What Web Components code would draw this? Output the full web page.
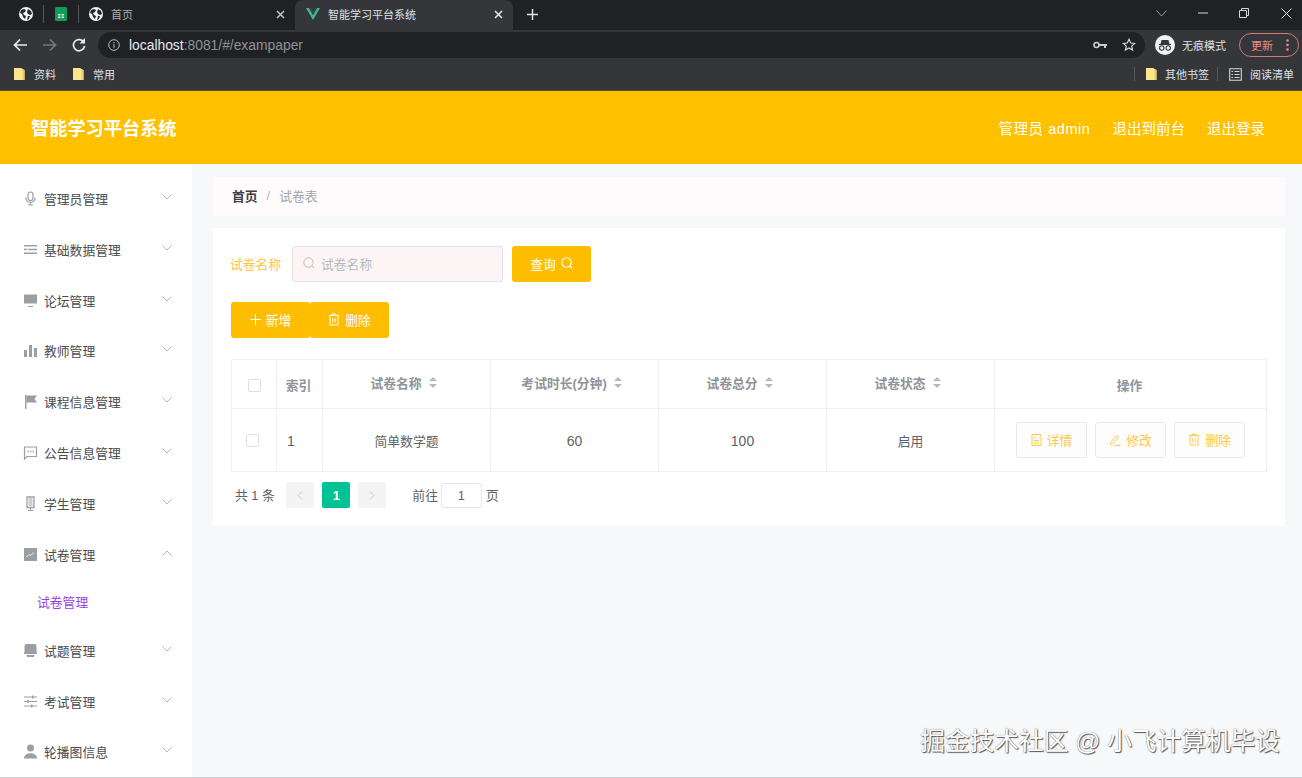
<!DOCTYPE html>
<html lang="zh">
<head>
<meta charset="utf-8">
<title>智能学习平台系统</title>
<style>
  html, body { margin: 0; height: 100%; overflow: hidden; background: #f7f8fa; }
  body { font-family: "Liberation Sans", "Noto Sans CJK SC", sans-serif; font-size: 12.8px; }
</style>
</head>
<body>
<browser-frame></browser-frame>
<site-header></site-header>
<page-body>
  <side-menu slot="side"></side-menu>
  <bread-crumb></bread-crumb>
  <paper-panel></paper-panel>
</page-body>
<water-mark>掘金技术社区 @ 小飞计算机毕设</water-mark>

<script>
const FONT = `"Liberation Sans", "Noto Sans CJK SC", sans-serif`
const globe = `<svg width="16" height="16" viewBox="0 0 16 16"><circle cx="8" cy="8" r="7" fill="#f1f3f4"/><path d="M3 4l3-1 2 1-1 2-2 1 1 2 2 1-1 3-2-2-1-3-2-1zM10 3l3 2 1 3-2 1-2-1-1-2zM10 10l2 0-1 3-2 1z" fill="#26272b"/></svg>`
const folder = `<svg width="11" height="14" viewBox="0 0 11 14"><path d="M0 1h7l3.500 2v10H0z" fill="#fde58f"/><path d="M8.500 3h2v10h-2z" fill="#e8ca72"/></svg>`

class BrowserFrame extends HTMLElement {
  constructor() {
    super()
    this.attachShadow({ mode: "open" }).innerHTML = `
    <style>
      :host { display: block; font-family: ${FONT}; color: #dfe1e5; }
      .tabs { height: 30px; background: #202124; display: flex; align-items: center; }
      .pin { width: 34px; display: flex; justify-content: center; flex: none; padding-bottom: 2px; box-sizing: border-box; }
      .pin:first-child { width: 43px; padding-left: 9px; }
      .sep { width: 1px; height: 18px; background: #55575b; flex: none; margin-bottom: 2px; }
      .tab { height: 30px; display: flex; align-items: center; box-sizing: border-box; font-size: 11px; flex: none; padding-bottom: 2px; }
      .tab.plain { width: 216px; padding-left: 9px; color: #a9acb1; }
      .tab.plain > svg { margin-right: 7px; }
      .tab .x { margin-left: auto; margin-right: 10px; display: flex; }
      .tab.on { background: #35363a; border-radius: 8px 8px 0 0; width: 218px; padding-left: 11px; color: #dfe1e5; }
      .tab.on svg.vue { margin-right: 8px; }
      .plus { margin-left: 14px; display: flex; margin-bottom: 2px; }
      .win { margin-left: auto; display: flex; align-items: center; padding-bottom: 4px; }
      .win span { width: 41.500px; display: flex; justify-content: center; }
      .win span:last-child { width: 32px; margin-left: 5px; }
      .bar { height: 30px; background: #35363a; display: flex; align-items: center; padding-left: 13px; }
      .nav { display: flex; align-items: center; gap: 15.500px; flex: none; }
      .omni { margin-left: 12px; width: 1047px; height: 26px; border-radius: 13px; background: #202124; display: flex; align-items: center; padding-left: 10px; box-sizing: border-box; font-size: 13.850px; flex: none; }
      .omni b { font-weight: 400; color: #e8eaed; margin-left: 9px; }
      .omni i { font-style: normal; color: #8f9296; }
      .omni .r { margin-left: auto; display: flex; gap: 15px; align-items: center; padding-right: 9px; }
      .incog { margin-left: 10px; display: flex; align-items: center; gap: 7px; font-size: 11px; height: 26px; width: 84px; flex: none; box-sizing: border-box; }
      .update { width: 60px; height: 24px; border: 1px solid #d07a74; border-radius: 13px; box-sizing: border-box; display: flex; align-items: center; padding-left: 11px; gap: 13px; color: #ee8a80; font-size: 11px; flex: none; }
      .marks { height: 31px; background: #35363a; display: flex; align-items: center; border-bottom: 1px solid #4f4a3a; box-sizing: border-box; padding: 0 0 2px 14px; font-size: 11px; }
      .marks span { display: flex; align-items: center; gap: 9px; margin-right: 17px; }
      .marks .end { margin-left: auto; display: flex; align-items: center; margin-right: 0; }
      .marks .bar-sep { width: 1px; height: 14px; background: #55575b; margin-right: 11px; }
      .marks .end span { margin-right: 8px; gap: 8px; }
    </style>
    <div class="tabs">
      <div class="pin">${globe}</div><div class="sep"></div>
      <div class="pin"><svg width="12" height="14" viewBox="0 0 12 14"><rect width="12" height="14" rx="1.500" fill="#0f9d58"/><path d="M3 7h2.500v1.500H3zM6.500 7H9v1.500H6.500zM3 9.500h2.500V11H3zM6.500 9.500H9V11H6.500z" fill="#d8f0e2"/></svg></div><div class="sep"></div>
      <div class="tab plain">${globe}<span>首页</span>
        <span class="x"><svg width="9" height="9" viewBox="0 0 9 9"><path d="M1 1l7 7M8 1L1 8" stroke="#c4c7ca" stroke-width="1.500"/></svg></span></div>
      <div class="tab on"><svg class="vue" width="14" height="12" viewBox="0 0 14 12"><path d="M0 0h3l4 7 4-7h3L7 12z" fill="#41b883"/><path d="M3 0h2.200L7 3.200 8.800 0H11L7 7z" fill="#35495e"/></svg><span>智能学习平台系统</span>
        <span class="x"><svg width="9" height="9" viewBox="0 0 9 9"><path d="M1 1l7 7M8 1L1 8" stroke="#e8eaed" stroke-width="1.500"/></svg></span></div>
      <span class="plus"><svg width="11" height="11" viewBox="0 0 11 11"><path d="M5.500 0v11M0 5.500h11" stroke="#dfe1e5" stroke-width="1.500"/></svg></span>
      <div class="win">
        <span><svg width="11" height="7" viewBox="0 0 11 7"><path d="M.5.500l5 5.500 5-5.500" fill="none" stroke="#9a9da1"/></svg></span>
        <span><svg width="10" height="2" viewBox="0 0 10 2"><path d="M0 1h10" stroke="#d6d8db"/></svg></span>
        <span><svg width="10" height="10" viewBox="0 0 10 10"><path d="M.5 2.500h7v7h-7zM2.500 2.500v-2h7v7h-2" fill="none" stroke="#d6d8db"/></svg></span>
        <span><svg width="11" height="11" viewBox="0 0 11 11"><path d="M.5.500l10 10M10.500.500l-10 10" stroke="#e2e4e6"/></svg></span>
      </div>
    </div>
    <div class="bar">
      <div class="nav">
        <svg width="14" height="14" viewBox="0 0 14 14"><path d="M14 7H2M7 1.500L1.500 7 7 12.500" fill="none" stroke="#e8eaed" stroke-width="1.700"/></svg>
        <svg width="14" height="14" viewBox="0 0 14 14"><path d="M0 7h12M7 1.500L12.500 7 7 12.500" fill="none" stroke="#75777b" stroke-width="1.700"/></svg>
        <svg width="14" height="14" viewBox="0 0 14 14"><path d="M12 4.500A5.600 5.600 0 1 0 12.600 8" fill="none" stroke="#e8eaed" stroke-width="1.700"/><path d="M13 0v5.500H7.500z" fill="#e8eaed"/></svg>
      </div>
      <div class="omni">
        <svg width="12" height="12" viewBox="0 0 12 12"><circle cx="6" cy="6" r="5.300" fill="none" stroke="#b7b9bd"/><path d="M6 5.200v3.500M6 3v1.200" stroke="#b7b9bd" stroke-width="1.100"/></svg>
        <b>localhost</b><i>:8081/#/exampaper</i>
        <div class="r">
          <svg width="14" height="8" viewBox="0 0 14 8"><circle cx="3.500" cy="4" r="2.500" fill="none" stroke="#c9cbce" stroke-width="1.600"/><path d="M6 3h8v2h-1v2h-2V5H6z" fill="#c9cbce"/></svg>
          <svg width="14" height="14" viewBox="0 0 14 14"><path d="M7 1.300l1.700 3.700 4 .4-3 2.700.9 4L7 10l-3.600 2.100.9-4-3-2.700 4-.4z" fill="none" stroke="#d5d7da" stroke-width="1.200"/></svg>
        </div>
      </div>
      <div class="incog">
        <svg width="20" height="20" viewBox="0 0 20 20"><circle cx="10" cy="10" r="10" fill="#f1f3f4"/><path d="M4 9h12v1H4zM6.500 5h7l1 4h-9z" fill="#35363a"/><circle cx="6.800" cy="13" r="2.200" fill="none" stroke="#35363a" stroke-width="1.100"/><circle cx="13.200" cy="13" r="2.200" fill="none" stroke="#35363a" stroke-width="1.100"/></svg>
        <span>无痕模式</span>
      </div>
      <div class="update"><span>更新</span><svg width="3" height="12" viewBox="0 0 3 12"><circle cx="1.500" cy="1.500" r="1.300" fill="#ee8a80"/><circle cx="1.500" cy="6" r="1.300" fill="#ee8a80"/><circle cx="1.500" cy="10.500" r="1.300" fill="#ee8a80"/></svg></div>
    </div>
    <div class="marks">
      <span>${folder}资料</span><span>${folder}常用</span>
      <div class="end">
        <i class="bar-sep"></i><span>${folder}其他书签</span><i class="bar-sep"></i>
        <span><svg width="13" height="13" viewBox="0 0 13 13"><path d="M.7.700h11.600v11.600H.7z" fill="none" stroke="#d6d8db" stroke-width="1.100"/><path d="M2.500 3.500h1.500M5.500 3.500h5M2.500 6.500h1.500M5.500 6.500h5M2.500 9.500h1.500M5.500 9.500h5" stroke="#d6d8db"/></svg>阅读清单</span>
      </div>
    </div>`
  }
}
customElements.define("browser-frame", BrowserFrame)

class SiteHeader extends HTMLElement {
  constructor() {
    super()
    this.attachShadow({ mode: "open" }).innerHTML = `
    <style>
      :host { display: flex; align-items: center; height: 73px; background: #ffc000; color: #fff; font-family: ${FONT}; padding: 0 37px 1px 31px; box-sizing: border-box; }
      h1 { margin: 0; font-size: 18.200px; font-weight: 700; }
      nav { margin-left: auto; display: flex; gap: 22px; font-size: 14.500px; }
      .user { letter-spacing: .55px; }
    </style>
    <h1>智能学习平台系统</h1>
    <nav><span class="user">管理员 admin</span><span>退出到前台</span><span>退出登录</span></nav>`
  }
}
customElements.define("site-header", SiteHeader)

class PageBody extends HTMLElement {
  constructor() {
    super()
    this.attachShadow({ mode: "open" }).innerHTML = `
    <style>
      :host { display: grid; grid-template-columns: 192px 1fr; height: 614px; overflow: hidden; border-bottom: 1px solid #cfd0d2; box-sizing: border-box; }
      .main { padding: 13px 17px 0 21px; display: flex; flex-direction: column; gap: 12px; min-width: 0; }
    </style>
    <slot name="side"></slot>
    <div class="main"><slot></slot></div>`
  }
}
customElements.define("page-body", PageBody)

const G = "#9b9ea3"
const MENU = [
  ["管理员管理", `<rect x="5" y="1" width="5" height="8.500" rx="2.500" fill="none" stroke="${G}" stroke-width="1.200"/><path d="M2.800 6.500c0 6.500 9.400 6.500 9.400 0M7.500 11.500V14M5 14h5" fill="none" stroke="${G}" stroke-width="1.200"/>`],
  ["基础数据管理", `<path d="M1 3h13v1.500H1zM5 6.700h9v1.500H5zM1 10.500h13V12H1z" fill="${G}"/><path d="M1 6.700h3v1.500H1z" fill="${G}"/>`],
  ["论坛管理", `<path d="M1 1.500h13v9H1z" fill="${G}"/><path d="M5 13h5v1H5z" fill="${G}"/>`],
  ["教师管理", `<path d="M1 7h3v7H1zM6 2h3v12H6zM11 5h3v9h-3z" fill="${G}"/>`],
  ["课程信息管理", `<path d="M2 1h1.500v14H2z" fill="${G}"/><path d="M3.500 1.500H14l-2.500 3.500L14 8.500H3.500z" fill="${G}"/>`],
  ["公告信息管理", `<path d="M1.500 2h12v9.500H4l-2.500 2.500z" fill="none" stroke="${G}" stroke-width="1.200"/><path d="M4.500 6.500h1.300M7 6.500h1.300M9.500 6.500h1.300" stroke="${G}" stroke-width="1.300"/>`],
  ["学生管理", `<path d="M4 1h7v10.500H4z" fill="none" stroke="${G}" stroke-width="1.300"/><path d="M5.500 3h4M5.500 5h4M5.500 7h4M5.500 9h4" stroke="${G}" stroke-width="1.100"/><path d="M7.500 11.500V14M5 14.500h5" stroke="${G}" stroke-width="1.200"/>`],
  ["试卷管理", `<path d="M1 1h13v13H1z" fill="${G}"/><path d="M3.500 10l2.500-2.500 1.500 1L11 5.500" fill="none" stroke="#fff" stroke-width=".8"/>`, true],
  ["试题管理", `<path d="M3.500 1h8a2 2 0 0 1 2 2v7h-12V3a2 2 0 0 1 2-2z" fill="${G}"/><path d="M1 9.500h13V11H1zM3.500 12h8l-.5 2H4z" fill="${G}"/>`],
  ["考试管理", `<path d="M1 3h13M1 7.500h13M1 12h13" stroke="${G}" stroke-width="1"/><path d="M9 1.500h1.500v3H9zM4 6h1.500v3H4zM8 10.500h1.500v3H8z" fill="${G}"/>`],
  ["轮播图信息", `<circle cx="7.500" cy="4" r="3.500" fill="${G}"/><path d="M1 14.500c0-7 13-7 13 0z" fill="${G}"/>`]
]

class SideMenu extends HTMLElement {
  constructor() {
    super()
    const rows = MENU.map(([label, icon, open]) => `
      <div class="row"><svg class="ico" width="15" height="15" viewBox="0 0 15 15">${icon}</svg><span>${label}</span>
        <svg class="arr" width="10" height="6" viewBox="0 0 10 6"><path d="${open ? "M.5 5.500L5 1l4.500 4.500" : "M.5.500L5 5 9.500.500"}" fill="none" stroke="#b4b6ba"/></svg></div>
      ${open ? `<div class="sub">${label}</div>` : ""}`).join("")
    this.attachShadow({ mode: "open" }).innerHTML = `
    <style>
      :host { display: block; background: #fff; font-family: ${FONT}; color: #4a4c50; font-size: 12.800px; padding-top: 9px; }
      .row { height: 50.850px; display: flex; align-items: center; padding: 0 20px 0 23px; }
      .ico { margin-right: 6px; flex: none; }
      .arr { margin-left: auto; margin-top: -3px; }
      .sub { height: 43px; display: flex; align-items: center; padding-left: 37px; color: #9a3fe0; margin-bottom: 2px; }
    </style>
    ${rows}`
  }
}
customElements.define("side-menu", SideMenu)

class BreadCrumb extends HTMLElement {
  constructor() {
    super()
    this.attachShadow({ mode: "open" }).innerHTML = `
    <style>
      :host { display: flex; align-items: center; height: 39px; background: #fffbfc; padding: 0 0 2px 19px; box-sizing: border-box; font-family: ${FONT}; font-size: 12.800px; }
      b { color: #3d3f43; }
      i { font-style: normal; color: #b3b5b9; margin: 0 9px; }
      span { color: #a3a6ad; }
    </style>
    <b>首页</b><i>/</i><span>试卷表</span>`
  }
}
customElements.define("bread-crumb", BreadCrumb)

class GoldButton extends HTMLElement {
  constructor() {
    super()
    this.attachShadow({ mode: "open" }).innerHTML = `
    <style>
      :host { display: inline-flex; align-items: center; justify-content: center; gap: 5px; height: 36px; width: 79px; background: #ffbd00; color: #fff; border-radius: 3px; font-size: 12.800px; box-sizing: border-box; padding-bottom: 2px; }
    </style>
    <slot></slot>`
  }
}
customElements.define("gold-button", GoldButton)

class LineButton extends HTMLElement {
  constructor() {
    super()
    this.attachShadow({ mode: "open" }).innerHTML = `
    <style>
      :host { display: inline-flex; align-items: center; justify-content: center; gap: 5px; height: 36px; width: 71px; background: #fdfdfd; color: #ffc84a; border: 1px solid #e6e8eb; border-radius: 3px; font-size: 12.800px; box-sizing: border-box; padding-bottom: 1px; }
    </style>
    <slot></slot>`
  }
}
customElements.define("line-button", LineButton)

const sortIcon = `<svg class="sort" width="8" height="11" viewBox="0 0 8 11"><path d="M4 0l4 4H0zM4 11L0 7h8z" fill="#b6b8bc"/></svg>`
const trash = c => `<svg width="12" height="13" viewBox="0 0 12 13"><path d="M1 2.500h10M4 2.500V1h4v1.500M2 2.500V12h8V2.500M4.800 5v4.500M7.200 5v4.500" fill="none" stroke="${c}"/></svg>`

class PaperPanel extends HTMLElement {
  constructor() {
    super()
    this.attachShadow({ mode: "open" }).innerHTML = `
    <style>
      :host { display: block; background: #fff; height: 298px; padding: 18px 18px 0; box-sizing: border-box; font-family: ${FONT}; font-size: 12.800px; color: #606266; }
      .search { display: flex; align-items: center; height: 36px; }
      .search label { color: #ffc44a; width: 62px; margin-left: -1px; padding-bottom: 2px; }
      .input { width: 211px; height: 36px; box-sizing: border-box; background: #fdf5f5; border: 1px solid #e4e2e4; border-radius: 3px; display: flex; align-items: center; padding: 0 0 2px 10px; gap: 6px; color: #b8babf; margin-right: 9px; }
      .ops { display: flex; margin-top: 20px; margin-bottom: 21px; }
      .table { display: grid; grid-template-columns: 45px 46px 168px 168px 168px 168px 1fr; border: 1px solid #eef0f3; width: 1036px; box-sizing: border-box; }
      .c { display: flex; align-items: center; justify-content: center; border-right: 1px solid #eef0f3; box-sizing: border-box; gap: 7px; }
      .c:nth-child(7n) { border-right: 0; }
      .h { height: 49px; border-bottom: 1px solid #eef0f3; color: #909399; font-weight: 700; padding: 0 6px 4px 0; }
      .h.plain { padding: 1px 2px 0 0; }
      .h.first { padding: 2px 0 0; }
      .d { height: 62px; color: #606266; }
      .d.num { font-size: 14px; padding-top: 1px; }
      .d.left { justify-content: flex-start; padding-left: 10px; }
      .d.first { padding: 1px 4px 0 0; }
      .d.op { gap: 8px; }
      .box { width: 13px; height: 13px; border: 1px solid #dcdfe6; border-radius: 2px; box-sizing: border-box; background: #fff; }
      .pager { display: flex; align-items: center; height: 26px; margin-top: 10px; padding-left: 4px; color: #606266; }
      .pg { width: 28px; height: 26px; background: #f4f4f5; border-radius: 2px; display: flex; align-items: center; justify-content: center; margin-right: 8px; }
      .pg.on { background: #00c292; color: #fff; font-weight: 700; }
      .jump { margin-left: 18px; display: flex; align-items: center; gap: 3px; }
      .jump span { padding-bottom: 2px; }
      .jump .in { width: 41px; height: 25px; border: 1px solid #e4e7ed; border-radius: 3px; box-sizing: border-box; display: flex; align-items: center; justify-content: center; margin-right: 1px; padding: 0; }
      .total { margin-right: 11.500px; padding-bottom: 2px; }
    </style>
    <div class="search">
      <label>试卷名称</label>
      <div class="input"><svg width="12" height="12" viewBox="0 0 12 12"><circle cx="5.500" cy="5.500" r="4.700" fill="none" stroke="#b8babf"/><path d="M9 9l2 2" stroke="#b8babf"/></svg>试卷名称</div>
      <gold-button>查询 <svg width="12" height="12" viewBox="0 0 12 12"><circle cx="5.500" cy="5.500" r="4.700" fill="none" stroke="#fff" stroke-width="1.100"/><path d="M9 9l2 2" stroke="#fff" stroke-width="1.100"/></svg></gold-button>
    </div>
    <div class="ops">
      <gold-button><svg width="11" height="11" viewBox="0 0 11 11"><path d="M5.500 0v11M0 5.500h11" stroke="#fff" stroke-width="1.100"/></svg>新增</gold-button>
      <gold-button>${trash("#fff")}删除</gold-button>
    </div>
    <div class="table">
      <div class="c h first"><span class="box"></span></div>
      <div class="c h plain">索引</div>
      <div class="c h">试卷名称 ${sortIcon}</div>
      <div class="c h">考试时长(分钟) ${sortIcon}</div>
      <div class="c h">试卷总分 ${sortIcon}</div>
      <div class="c h">试卷状态 ${sortIcon}</div>
      <div class="c h plain">操作</div>
      <div class="c d first"><span class="box"></span></div>
      <div class="c d left num">1</div>
      <div class="c d">简单数学题</div>
      <div class="c d num">60</div>
      <div class="c d num">100</div>
      <div class="c d">启用</div>
      <div class="c d op">
        <line-button><svg width="11" height="12" viewBox="0 0 11 12"><path d="M1 .5h9v11H1zM3 3.500h2M3 6.500h5M3 9h5" fill="none" stroke="#ffc84a"/></svg>详情</line-button>
        <line-button><svg width="12" height="12" viewBox="0 0 12 12"><path d="M1.500 8.500L7.500 1.500l2 1.700-6 7H1.500zM5.500 11.500h6" fill="none" stroke="#ffc84a"/></svg>修改</line-button>
        <line-button>${trash("#ffc84a")}删除</line-button>
      </div>
    </div>
    <div class="pager">
      <span class="total">共 1 条</span>
      <div class="pg"><svg width="6" height="9" viewBox="0 0 6 9"><path d="M5 .5L1 4.500 5 8.500" fill="none" stroke="#c0c4cc"/></svg></div>
      <div class="pg on">1</div>
      <div class="pg"><svg width="6" height="9" viewBox="0 0 6 9"><path d="M1 .5l4 4-4 4" fill="none" stroke="#c0c4cc"/></svg></div>
      <div class="jump"><span>前往</span><span class="in">1</span><span>页</span></div>
    </div>`
  }
}
customElements.define("paper-panel", PaperPanel)

class WaterMark extends HTMLElement {
  constructor() {
    super()
    this.attachShadow({ mode: "open" }).innerHTML = `
    <style>
      :host { position: absolute; right: 22px; top: 726px; font-family: ${FONT}; font-size: 24.700px; line-height: 32px; color: #fff; white-space: nowrap; text-shadow: 1px 1px 1px #555, 0 0 1px #555; }
    </style>
    <slot></slot>`
  }
}
customElements.define("water-mark", WaterMark)
</script>
</body>
</html>
